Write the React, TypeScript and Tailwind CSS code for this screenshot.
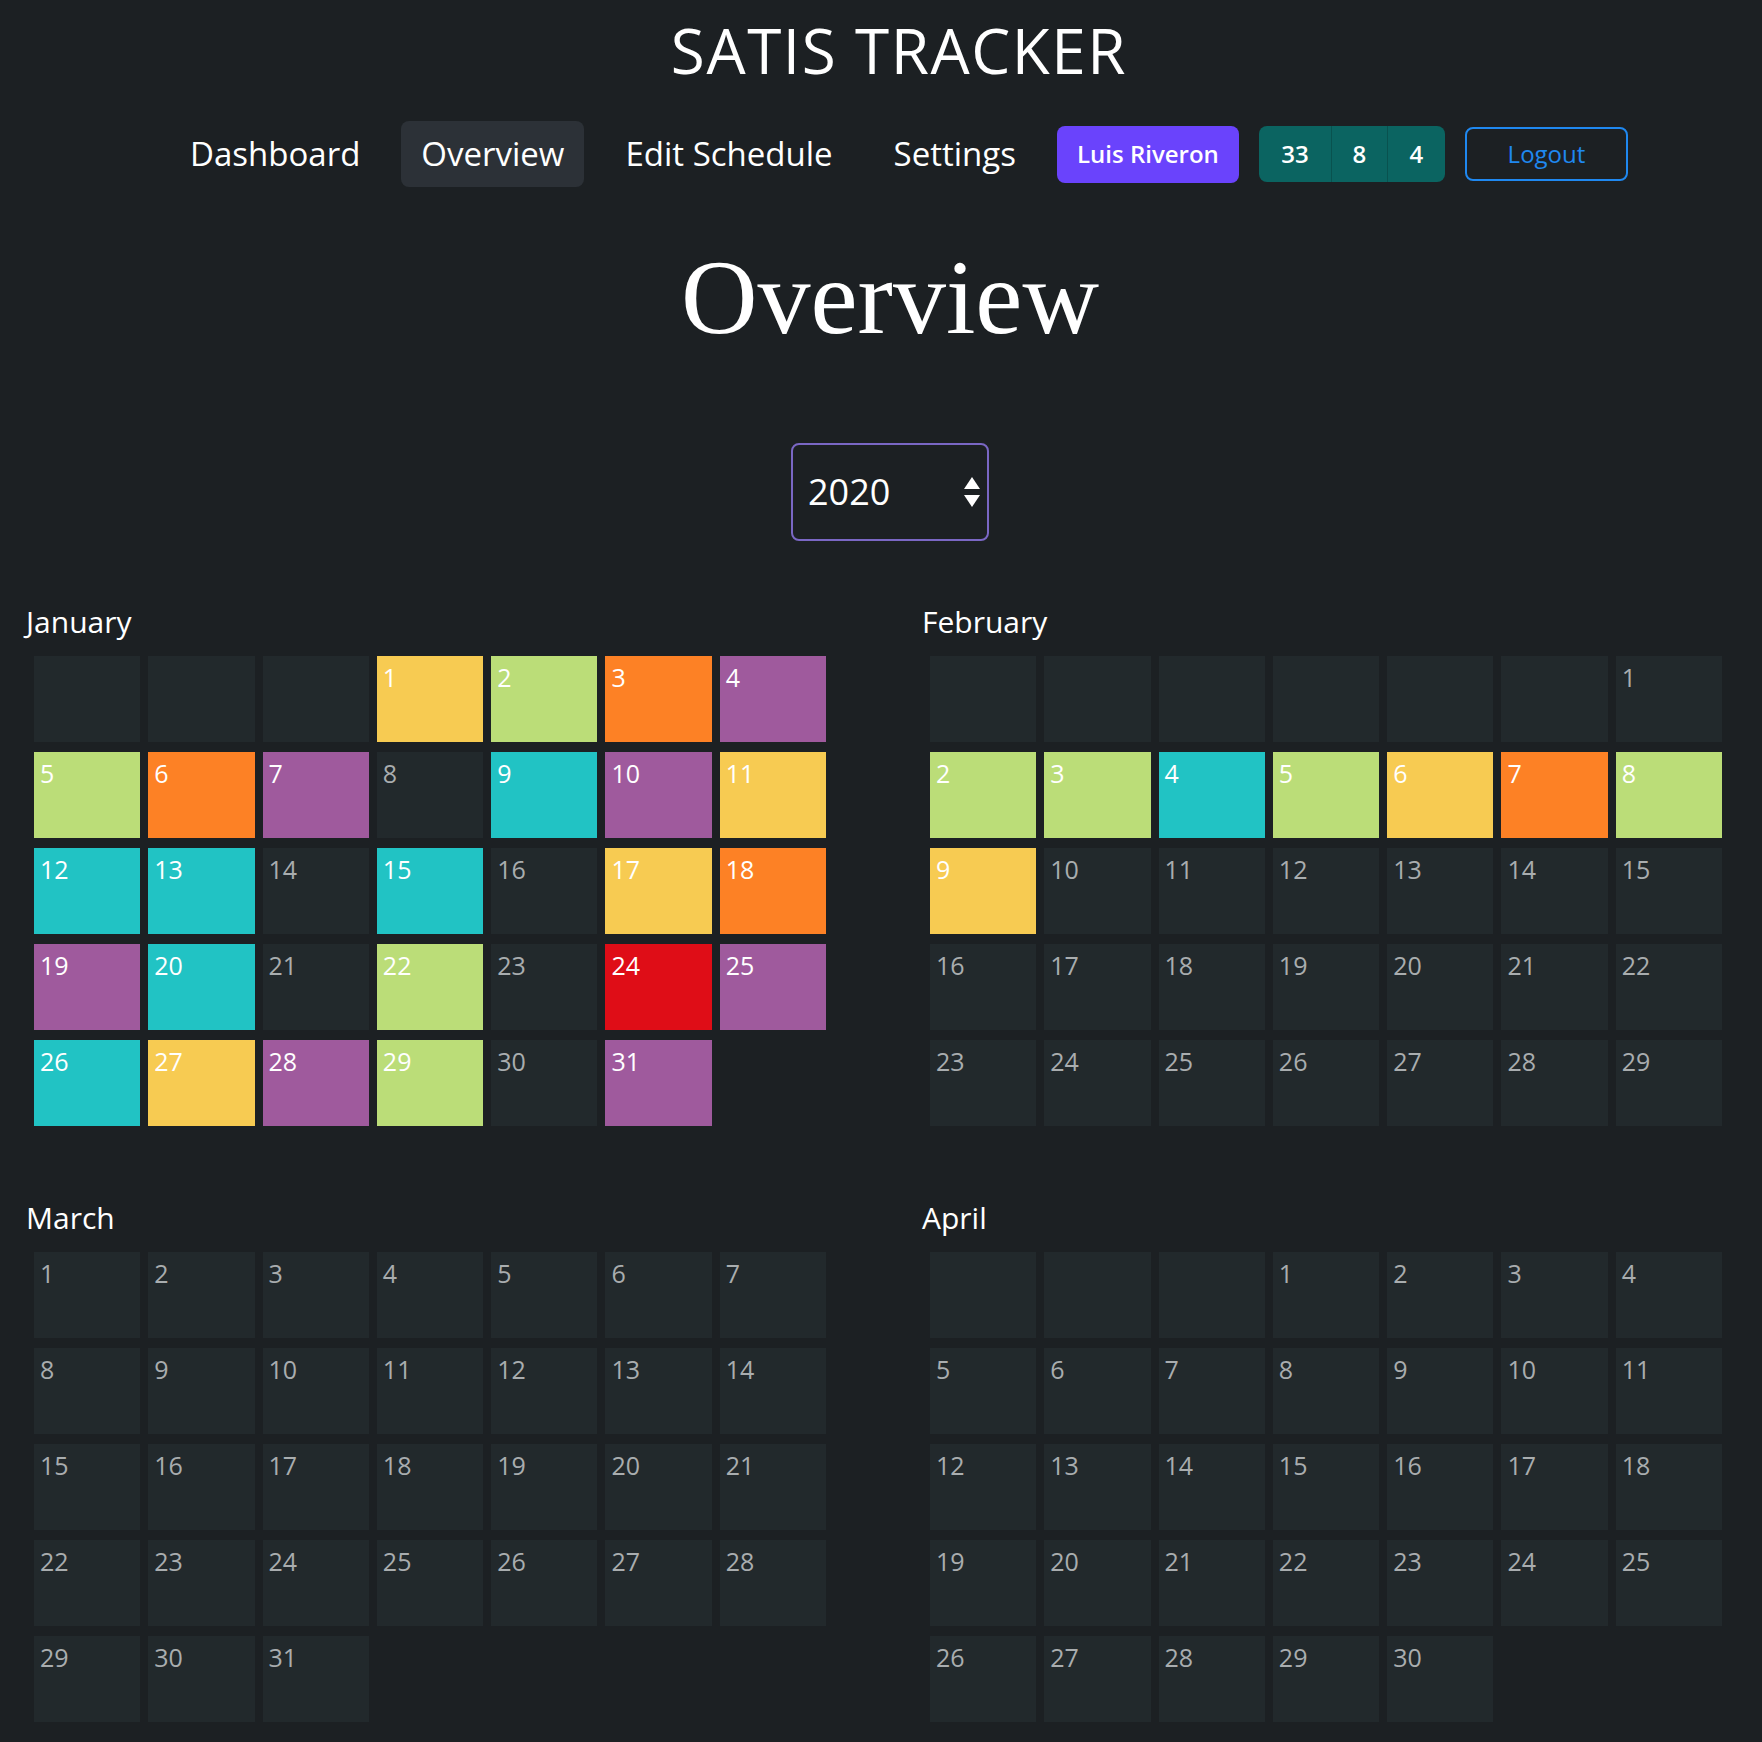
import React from 'react';

// Colour key used by the tracker cells
type Mark = 'y' | 'g' | 'o' | 'p' | 't' | 'r';

const markClass: Record<Mark, string> = {
  y: 'bg-[#f7cb52] text-white',
  g: 'bg-[#bbdd78] text-white',
  o: 'bg-[#fd8125] text-white',
  p: 'bg-[#9f5a9d] text-white',
  t: 'bg-[#21c3c4] text-white',
  r: 'bg-[#df0d17] text-white',
};

interface Month {
  name: string;
  offset: number;
  days: number;
  marks: Record<number, Mark>;
}

const months: Month[] = [
  {
    name: 'January',
    offset: 3,
    days: 31,
    marks: {
      1: 'y', 2: 'g', 3: 'o', 4: 'p',
      5: 'g', 6: 'o', 7: 'p', 9: 't', 10: 'p', 11: 'y',
      12: 't', 13: 't', 15: 't', 17: 'y', 18: 'o',
      19: 'p', 20: 't', 22: 'g', 24: 'r', 25: 'p',
      26: 't', 27: 'y', 28: 'p', 29: 'g', 31: 'p',
    },
  },
  {
    name: 'February',
    offset: 6,
    days: 29,
    marks: { 2: 'g', 3: 'g', 4: 't', 5: 'g', 6: 'y', 7: 'o', 8: 'g', 9: 'y' },
  },
  { name: 'March', offset: 0, days: 31, marks: {} },
  { name: 'April', offset: 3, days: 30, marks: {} },
];

const navLinks = ['Dashboard', 'Overview', 'Edit Schedule', 'Settings'];

function MonthGrid({ month }: { month: Month }) {
  const blanks = Array.from({ length: month.offset });
  const days = Array.from({ length: month.days }, (_, i) => i + 1);

  return (
    <div className="w-[808px]">
      <h3 className="h-[36px] text-[30px] leading-[36px] font-normal text-white">{month.name}</h3>
      <div className="mt-[16px] ml-[8px] grid w-[792px] grid-cols-7 gap-x-[8px] gap-y-[10px]">
        {blanks.map((_, i) => (
          <div key={`blank-${i}`} className="h-[86px] bg-[#22292c]" />
        ))}
        {days.map((day) => {
          const mark = month.marks[day];
          return (
            <div
              key={day}
              className={`h-[86px] px-[6px] pt-[6px] text-[25px] leading-[30px] ${
                mark ? markClass[mark] : 'bg-[#22292c] text-[#a9adaf]'
              }`}
            >
              {day}
            </div>
          );
        })}
      </div>
    </div>
  );
}

export default function App() {
  return (
    <div
      className="min-h-[1742px] w-full overflow-hidden bg-[#1c2023] text-white"
      style={{ fontFamily: '"Open Sans", "Noto Sans", sans-serif' }}
    >
      {/* Header */}
      <header className="pt-[14px] pl-[36px]">
        <h1 className="text-center text-[62px] leading-[72px] font-medium tracking-[0.025em]">SATIS TRACKER</h1>
        <nav className="mt-[35px] flex items-center justify-center">
          <div className="flex items-center gap-[21px]">
            {navLinks.map((label) => (
              <a
                key={label}
                href="#"
                className={`flex h-[66px] items-center rounded-[8px] px-[20px] text-[33px] text-white ${
                  label === 'Overview' ? 'bg-[#2c3137]' : ''
                }`}
              >
                {label}
              </a>
            ))}
          </div>
          <button className="ml-[21px] flex h-[57px] w-[182px] items-center justify-center rounded-[8px] bg-[#6a43fc] text-[24px] font-semibold text-white">
            Luis Riveron
          </button>
          <div className="ml-[20px] flex h-[56px] overflow-hidden rounded-[8px] bg-[#0b6461] text-[24px] font-semibold text-white">
            <span className="flex w-[73px] items-center justify-center border-r border-[#09524f]">33</span>
            <span className="flex w-[56px] items-center justify-center border-r border-[#09524f]">8</span>
            <span className="flex w-[57px] items-center justify-center">4</span>
          </div>
          <button className="ml-[20px] flex h-[54px] w-[163px] items-center justify-center rounded-[8px] border-2 border-[#1f88f0] text-[24px] text-[#1f88f0]">
            Logout
          </button>
        </nav>
      </header>

      <main className="pl-[18px]">
        <h2
          className="mt-[58px] text-center text-[106px] leading-[106px] font-normal"
          style={{ fontFamily: '"Liberation Serif", "DejaVu Serif", serif' }}
        >
          Overview
        </h2>

        {/* Year picker */}
        <div className="mt-[92px] flex justify-center">
          <div className="flex h-[98px] w-[198px] items-center justify-between rounded-[8px] border-2 border-[#7a67c4] pr-[7px] pl-[15px]">
            <span className="text-[36px] leading-none text-white">2020</span>
            <svg width="16" height="30" viewBox="0 0 16 30" fill="white">
              <polygon points="8,0 16,12 0,12" />
              <polygon points="0,18 16,18 8,30" />
            </svg>
          </div>
        </div>
      </main>

      {/* Calendar months */}
      <section className="mt-[63px] grid grid-cols-[808px_808px] gap-x-[88px] gap-y-[74px] pl-[26px]">
        {months.map((month) => (
          <MonthGrid key={month.name} month={month} />
        ))}
      </section>
    </div>
  );
}
